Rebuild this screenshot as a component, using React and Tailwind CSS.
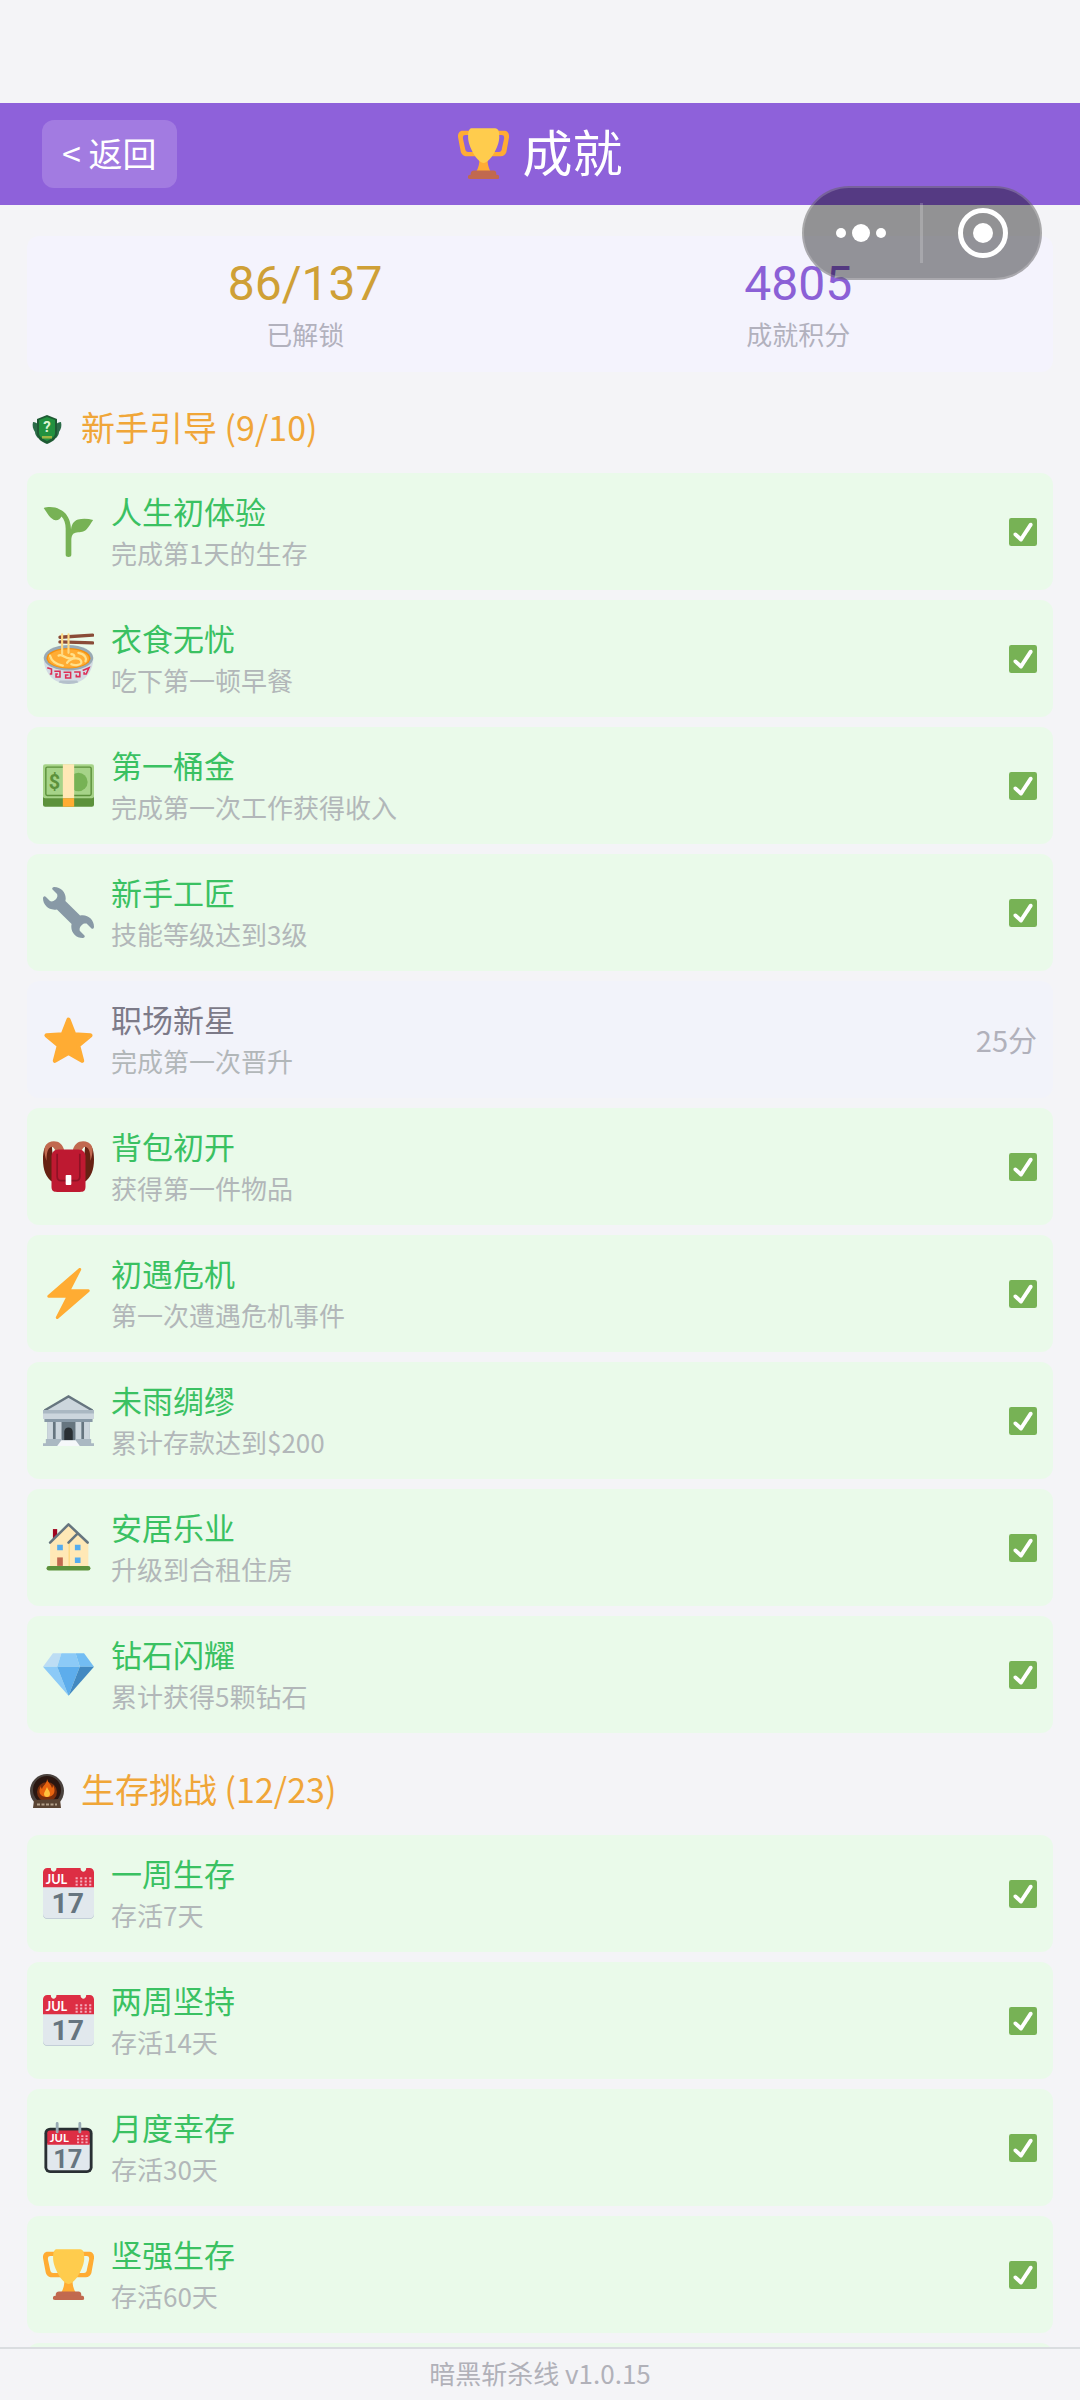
const icons = {
  trophy: (
    <>
      <path
        fill="#FFAC33"
        d="M5.123 5h6C12.227 5 13 4.896 13 6V4c0-1.104-.773-2-1.877-2h-8c-2 0-3.583 2.125-3 5 0 0 1.791 9.375 1.917 9.958C2.373 18.5 4.164 20 6.081 20h6.958c1.105 0-.039-1.896-.039-3v-2c0 1.104-.773 2-1.877 2h-4c-1.104 0-1.833-1.042-2-2S3.539 7.667 3.539 7.667C3.206 5.75 4.018 5 5.123 5zm25.812 0h-6C23.831 5 22 4.896 22 6V4c0-1.104 1.831-2 2.935-2h8c2 0 3.584 2.125 3 5 0 0-1.633 9.419-1.771 10-.354 1.5-2.042 3-4 3h-7.146C21.914 20 22 18.104 22 17v-2c0 1.104 1.831 2 2.935 2h4c1.104 0 1.834-1.042 2-2s1.584-7.333 1.584-7.333C32.851 5.75 32.04 5 30.935 5zM20.832 22c0-6.958-2.709 0-2.709 0s-3-6.958-3 0-3.291 10-3.291 10h12.292c-.001 0-3.292-3.042-3.292-10z"
      />
      <path
        fill="#FFCC4D"
        d="M29.123 6.577c0 6.775-6.77 18.192-11 18.192-4.231 0-11-11.417-11-18.192 0-5.195 1-6.319 3-6.319 1.374 0 6.025-.027 8-.027l7-.001c2.917-.001 4 .684 4 6.347z"
      />
      <path
        fill="#C1694F"
        d="M27 33c0 1.104.227 2-.877 2h-16C9.018 35 9 34.104 9 33v-1c0-1.104 1.164-2 2.206-2h13.917c1.042 0 1.877.896 1.877 2v1z"
      />
      <path
        fill="#C1694F"
        d="M29 34.625c0 .76.165 1.375-1.252 1.375H8.498C7.206 36 7 35.385 7 34.625v-.25C7 33.615 7.738 33 8.498 33h19.25c.759 0 1.252.615 1.252 1.375v.25z"
      />
    </>
  ),
  seedling: (
    <path
      fill="#77B255"
      d="M.5 1.4C3.500.2 8.600.4 11.800 2.400c3.200 1.100 5.800 4.300 7 8.200.6 1.900.9 3.900 1 6 .4-3.500 1.800-6.100 5-7 3.200-1 7.200-.6 10.600.2-2 2.600-3.600 6.600-6.600 8-2.800 1.100-5.600.4-7.400 1.800-1 .9-1.400 2.800-1.400 4.400v10.400c0 1-.8 1.600-2 1.600s-2-.6-2-1.600V16c0-3.600-1-6.800-3-8.600-.8 1.600-2.200 2.800-4.200 2.600C5.200 9.600 2.600 4.400.5 1.400z"
    />
  ),
  ramen: (
    <>
      <path fill="#D3DCE4" d="M.5 17.500C.5 27.500 7 36 18 36s17.500-8.500 17.500-18.500z" />
      <path fill="#B4C0CB" d="M11 35c4 1.300 10 1.300 14 0l-1-1.500H12z" />
      <ellipse cx="18" cy="17.500" rx="17.500" ry="9" fill="#99AAB5" />
      <ellipse cx="18" cy="17.800" rx="15.500" ry="7.300" fill="#F4900C" />
      <ellipse cx="18" cy="18" rx="14.500" ry="6.500" fill="#FFAC33" />
      <path
        fill="none"
        stroke="#FFE08A"
        strokeWidth="1.600"
        strokeLinecap="round"
        d="M5 16c1 4 4 6 9 7M11 16c2-2 4 2 8 2s4-3 1-3M17 21c3-4 9-4 10-1s-5 3-7 2M25 14c5 1 6 4 5 6"
      />
      <path stroke="#8A4B38" strokeWidth="2.400" strokeLinecap="round" d="M12 3l23-1.500M12 6.300L35 7" />
      <path
        fill="none"
        stroke="#FFD983"
        strokeWidth="1.500"
        strokeLinecap="round"
        d="M13.500 1v14M18 1v13"
      />
      <path
        fill="none"
        stroke="#DD2E56"
        strokeWidth="1.100"
        d="M3 24.500l3 1v3.500H4.800M8 27h4v4H9.200v-2h1.300M14.500 27.700h5v4H16v-2h2M22 27.500h4v3.300h-2.500v-1.500M28 26.500l4.500-2-2 4.500h-1.500v-1.500"
      />
    </>
  ),
  cash: (
    <>
      <path fill="#5C913B" d="M0 25h36v6.500a1.500 1.500 0 0 1-1.500 1.500h-33A1.500 1.500 0 0 1 0 31.500z" />
      <rect y="3" width="36" height="24" rx="1.500" fill="#A6D388" />
      <rect x="2" y="5" width="32" height="20" rx="1" fill="none" stroke="#5C913B" />
      <circle cx="25" cy="15.500" r="6.500" fill="#77B255" />
      <text
        x="8"
        y="20.500"
        textAnchor="middle"
        fontSize="14"
        fontWeight="700"
        fontFamily="Roboto, sans-serif"
        fill="#5C913B"
      >
        $
      </text>
      <path fill="#FFE8B6" d="M14 3h8v24h-8z" />
      <path fill="#FFAC33" d="M14 27h8v6h-8z" />
    </>
  ),
  wrench: (
    <path
      fill="#8899A6"
      d="M27.989 19.977c-.622 0-1.225.078-1.806.213L15.811 9.818c.134-.581.212-1.184.212-1.806C16.023 3.587 12.436 0 8.012 0 7.11 0 5.91.916 6.909 1.915l2.997 2.997s.999 1.998-.999 3.995-3.996.998-3.996.998L1.915 6.909C.916 5.91 0 7.105 0 8.012c0 4.425 3.587 8.012 8.012 8.012.622 0 1.225-.078 1.806-.212l10.371 10.371c-.135.581-.213 1.184-.213 1.806 0 4.425 3.588 8.011 8.012 8.011.901 0 2.101-.916 1.102-1.915l-2.997-2.997s-.999-1.998.999-3.995 3.995-.999 3.995-.999l2.997 2.997c1 .999 1.916-.196 1.916-1.102 0-4.425-3.587-8.012-8.011-8.012z"
    />
  ),
  star: (
    <path
      fill="#FFAC33"
      stroke="#FFAC33"
      strokeWidth="3"
      strokeLinejoin="round"
      d="M18 4l4 10.300 11.500.7-8.700 7.300 2.800 10.700L18 27.500l-9.600 5.500 2.800-10.700-8.700-7.300 11.500-.7z"
    />
  ),
  backpack: (
    <>
      <path fill="#662113" d="M6 1C1 2 0 7 0 13c0 7 2 13 7 16V12zM30 1c5 1 6 6 6 12 0 7-2 13-7 16V12z" />
      <path fill="#C1694F" d="M4 1c5-2 10 0 11 6H9C8 5 7 4 6 4 3 5 2.500 9 2.500 14 .5 8 0 3 4 1zM32 1c-5-2-10 0-11 6h6c1-2 2-3 3-3 3 1 3.500 5 3.500 10C35.500 8 36 3 32 1z" />
      <path fill="#BE1931" d="M6 11c0-3 2-5 5-5h14c3 0 5 2 5 5v21c0 3-1 4-4 4H10c-3 0-4-1-4-4z" />
      <path fill="none" stroke="#8F1225" strokeWidth="1.200" d="M10 9v16c0 2 1 3 3 3h10c2 0 3-1 3-3V9" />
      <rect x="16" y="24" width="4" height="7" rx=".6" fill="#FFF" />
    </>
  ),
  zap: (
    <path
      fill="#FFAC33"
      d="M32.938 15.651C32.792 15.26 32.418 15 32 15H19.925L26.89 1.458c.219-.426.106-.947-.271-1.243C26.437.071 26.218 0 26 0c-.233 0-.466.082-.653.243L18 6.588 3.347 19.243c-.316.273-.43.714-.284 1.105S3.582 21 4 21h12.075L9.11 34.542c-.219.426-.106.947.271 1.243.182.144.401.215.619.215.233 0 .466-.082.653-.243L18 29.412l14.653-12.655c.317-.273.43-.714.285-1.106z"
    />
  ),
  bank: (
    <>
      <path fill="#9AA9B5" d="M3 18h30v15H3z" />
      <path fill="#CCD6DD" d="M2 11L18 1l16 10z" />
      <path fill="none" stroke="#66757F" strokeWidth="1.600" d="M1 11L18 1l17 10" />
      <path fill="#AAB8C2" d="M0 10.500h36v3H0z" />
      <path fill="#CCD6DD" d="M0 13h36v4H0z" />
      <path fill="#8899A6" d="M1 17h34v2H1z" />
      <path fill="#66757F" d="M7 19h2v13H7zM13 19h10v13H13zM27 19h2v13h-2z" />
      <path fill="#CCD6DD" d="M3 19h4v13H3zM9 19h4v13H9zM23 19h4v13h-4zM29 19h4v13h-4z" />
      <path fill="#292F33" d="M15 32v-6c0-4 6-4 6 0v6z" />
      <path fill="#AAB8C2" d="M2 31h11v3h10v-3h11v3h2v2H0v-2h2z" />
      <path fill="#F5F8FA" d="M13 32h10l3 4H10z" />
    </>
  ),
  house: (
    <>
      <path fill="#A0041E" d="M7 5h3v8H7z" />
      <path fill="#FFE8B6" d="M5 14L18 2l8 7 6 6v18H5z" />
      <path fill="#FFD983" d="M18 15l1-1v19h-1z" />
      <path
        fill="none"
        stroke="#66757F"
        strokeWidth="1.800"
        strokeLinecap="round"
        strokeLinejoin="round"
        d="M5 14.500L18 1.700l13.500 12.800M18 14.500l6-6"
      />
      <path fill="#55ACEE" d="M10 16h4v4h-4zM22.500 16h4v4h-4zM22.500 25h4v4h-4z" />
      <path fill="#C1694F" d="M10 25h4v6h-4z" />
      <rect x="2.500" y="31" width="31" height="3.200" rx="1.600" fill="#5C913B" />
    </>
  ),
  gem: (
    <>
      <path fill="#BDDDF4" d="M7 3h6l-3 9.500H0z" />
      <path fill="#8CCAF7" d="M13 3h10l3 9.500H10zM0 12.500h10L18 33z" />
      <path fill="#73BDF3" d="M23 3h6l7 9.500H26z" />
      <path fill="#5DADEC" d="M10 12.500h16L18 33z" />
      <path fill="#4289C1" d="M26 12.500h10L18 33z" />
    </>
  ),
  calendar: (
    <>
      <rect y="8" width="36" height="28" rx="3" fill="#B9C6D0" />
      <rect y="8" width="36" height="27.500" rx="3" fill="#E1E8ED" />
      <path
        fill="#DD2E44"
        d="M3 0h2.500c0 3.500 4 3.500 4 0h17c0 3.500 4 3.500 4 0H33a3 3 0 0 1 3 3v10.500H0V3a3 3 0 0 1 3-3z"
      />
      <text x="9.500" y="11.300" textAnchor="middle" fontSize="9" fontWeight="700" fontFamily="Lato, sans-serif" fill="#FFF">
        JUL
      </text>
      <path
        stroke="#F4ABBA"
        strokeWidth="1.500"
        strokeDasharray="1.500 1.700"
        d="M23 7.200h11.500M23 9.500h11.500M23 11.800h11.500"
      />
      <text x="17.500" y="32" textAnchor="middle" fontSize="20" fontWeight="700" fontFamily="Roboto, sans-serif" fill="#66757F">
        17
      </text>
    </>
  ),
  spiral: (
    <>
      <rect x="1" y="4" width="34" height="32" rx="4" fill="#292F33" />
      <path fill="#E1E8ED" d="M3 15h30v17a2 2 0 0 1-2 2H5a2 2 0 0 1-2-2z" />
      <path fill="#DD2E44" d="M5 6h26a2 2 0 0 1 2 2v8H3V8a2 2 0 0 1 2-2z" />
      <path stroke="#99AAB5" strokeWidth="2" strokeLinecap="round" d="M10 1v6M26 1v6" />
      <text x="11.500" y="14" textAnchor="middle" fontSize="8" fontWeight="700" fontFamily="Lato, sans-serif" fill="#FFF">
        JUL
      </text>
      <path
        stroke="#F4ABBA"
        strokeWidth="1.300"
        strokeDasharray="1.500 1.500"
        d="M24 10h8M24 12.200h8M24 14.400h8"
      />
      <text x="17.500" y="32.500" textAnchor="middle" fontSize="18" fontWeight="700" fontFamily="Roboto, sans-serif" fill="#66757F">
        17
      </text>
    </>
  ),
  check: (
    <>
      <rect width="36" height="36" rx="3" fill="#77B255" />
      <path
        fill="#FFF"
        d="M29.28 6.362c-1.156-.751-2.704-.422-3.458.736L14.936 23.877l-5.029-4.65c-1.014-.938-2.596-.875-3.533.138-.937 1.014-.875 2.596.139 3.533l7.209 6.666c.48.445 1.09.665 1.696.665.673 0 1.534-.282 2.099-1.139.332-.506 12.5-19.27 12.5-19.27.751-1.159.421-2.707-.737-3.458z"
      />
    </>
  ),
  shield: (
    <>
      <path fill="#2B6B48" d="M4 11c2 0 4 1 6 3l-1 13c-2-2-3-4-3-6-2-3-3-6-2-10zM32 11c-2 0-4 1-6 3l1 13c2-2 3-4 3-6 2-3 3-6 2-10z" />
      <path fill="#1E5A34" d="M18 4l10 4v15c0 5-5 8-10 10-5-2-10-5-10-10V8z" />
      <path fill="#22913F" d="M18 6l8 3v13c0 4-4 6-8 8-4-2-8-4-8-8V9z" />
      <text x="18" y="21" textAnchor="middle" fontSize="15" fontWeight="700" fontFamily="Roboto, sans-serif" fill="#DDF5D3">
        ?
      </text>
      <path fill="#9DB544" d="M13 25h10v2.500H13z" />
    </>
  ),
  campfire: (
    <>
      <circle cx="18" cy="18" r="17" fill="#4A423E" />
      <circle cx="18" cy="17" r="14" fill="#2A1610" />
      <circle cx="18" cy="19" r="10" fill="#7A2E0C" />
      <path fill="#E8640F" d="M18 6c1 4 4 5 5 9 1-1 1-2 1-3 3 5 2 12-6 12s-9-6-6-11c0 1 0 2 1 3 1-4 5-5 5-10z" />
      <path fill="#FFC23D" d="M18 14c1 3 3 4 3 7 0 4-6 4-6 0 0-2 2-4 3-7z" />
      <path fill="#5A4434" d="M5 27l26-1 1 9H4z" />
      <path stroke="#B3A08A" strokeWidth="2" strokeDasharray="3 1.500" d="M8 31.500h20" />
    </>
  ),
};

function Icon({ name, className }) {
  return (
    <svg viewBox="0 0 36 36" className={className} aria-hidden="true">
      {icons[name]}
    </svg>
  );
}

const sections = [
  {
    icon: "shield",
    title: "新手引导 (9/10)",
    items: [
      { icon: "seedling", name: "人生初体验", desc: "完成第1天的生存", done: true },
      { icon: "ramen", name: "衣食无忧", desc: "吃下第一顿早餐", done: true },
      { icon: "cash", name: "第一桶金", desc: "完成第一次工作获得收入", done: true },
      { icon: "wrench", name: "新手工匠", desc: "技能等级达到3级", done: true },
      { icon: "star", name: "职场新星", desc: "完成第一次晋升", points: "25分" },
      { icon: "backpack", name: "背包初开", desc: "获得第一件物品", done: true },
      { icon: "zap", name: "初遇危机", desc: "第一次遭遇危机事件", done: true },
      { icon: "bank", name: "未雨绸缪", desc: "累计存款达到$200", done: true },
      { icon: "house", name: "安居乐业", desc: "升级到合租住房", done: true },
      { icon: "gem", name: "钻石闪耀", desc: "累计获得5颗钻石", done: true },
    ],
  },
  {
    icon: "campfire",
    title: "生存挑战 (12/23)",
    items: [
      { icon: "calendar", name: "一周生存", desc: "存活7天", done: true },
      { icon: "calendar", name: "两周坚持", desc: "存活14天", done: true },
      { icon: "spiral", name: "月度幸存", desc: "存活30天", done: true },
      { icon: "trophy", name: "坚强生存", desc: "存活60天", done: true },
    ],
    more: true,
  },
];

function Achievement({ item }) {
  return (
    <li
      className={`flex items-center rounded-xl py-[15px] px-4 ${
        item.done ? "bg-[#eafaea]" : "bg-[#f2f3fa]"
      }`}
    >
      <Icon name={item.icon} className="w-[51px] h-[51px] shrink-0" />
      <div className="flex-1 ml-[17px] pb-1">
        <h3
          className={`text-[31px] leading-[46px] ${
            item.done ? "text-[#3ac162]" : "text-[#7c7a88]"
          }`}
        >
          {item.name}
        </h3>
        <p className="text-[26px] leading-[37px] text-[#b2b7b9]">{item.desc}</p>
      </div>
      {item.done ? (
        <Icon name="check" className="w-7 h-7" />
      ) : (
        <span className="text-[29px] text-[#b1b1bb]">{item.points}</span>
      )}
    </li>
  );
}

function Section({ section }) {
  return (
    <section>
      <h2 className="flex items-center gap-4 h-[54px] pl-[2px] text-[34px] text-[#f0a638]">
        <Icon name={section.icon} className="w-9 h-9 mt-[2px]" />
        <span className="pb-[3px]">{section.title}</span>
      </h2>
      <ul className="flex flex-col gap-[10px] mt-[18px]">
        {section.items.map((item) => (
          <Achievement key={item.name} item={item} />
        ))}
        {section.more && <li className="h-4 rounded-t-xl bg-[#eafaea]" aria-hidden="true" />}
      </ul>
    </section>
  );
}

function Stat({ value, label, className }) {
  return (
    <div className="text-center">
      <div className={`font-[Roboto] text-[48px] leading-[56px] ${className}`}>{value}</div>
      <div className="mt-[3px] text-[26px] leading-[38px] text-[#b2b1bd]">{label}</div>
    </div>
  );
}

function Capsule() {
  return (
    <div className="absolute top-[186px] right-[38px] z-10 flex items-center w-60 h-[94px] rounded-full bg-black/40 border-2 border-white/20">
      <button aria-label="更多" className="flex-1 flex items-center justify-center gap-[6px] pr-[2px]">
        <span className="w-[10px] h-[10px] rounded-full bg-white"></span>
        <span className="w-[18px] h-[18px] rounded-full bg-white"></span>
        <span className="w-[10px] h-[10px] rounded-full bg-white"></span>
      </button>
      <span className="w-[3px] h-[60px] bg-white/20"></span>
      <button aria-label="关闭" className="flex-1 flex items-center justify-center pl-1">
        <span className="flex items-center justify-center w-[50px] h-[50px] rounded-full border-5 border-white">
          <span className="w-5 h-5 rounded-full bg-white"></span>
        </span>
      </button>
    </div>
  );
}

export default function App() {
  return (
    <div className="relative flex flex-col h-screen bg-[#f4f4f7] font-['Noto_Sans_CJK_SC',sans-serif]">
      <header className="mt-[103px] grid grid-cols-[1fr_auto_1fr] items-center h-[102px] shrink-0 px-[42px] bg-[#8e61da] text-white">
        <button className="justify-self-start h-[68px] px-5 pb-1 rounded-xl bg-[#a27be1] text-[34px]">
          &lt; 返回
        </button>
        <h1 className="flex items-center gap-[14px] pb-[2px] text-[50px] leading-[60px]">
          <Icon name="trophy" className="w-[51px] h-[51px]" />
          <span className="pb-[6px]">成就</span>
        </h1>
      </header>

      <Capsule />

      <main className="flex-1 min-h-0 overflow-hidden px-[27px] pt-[31px]">
        <div className="flex justify-around rounded-xl bg-[#f4f3fd] px-5 pt-5 pb-[19px]">
          <Stat value="86/137" label="已解锁" className="text-[#cfa036]" />
          <Stat value="4805" label="成就积分" className="text-[#8b60d6]" />
        </div>
        <div className="flex flex-col gap-[30px] mt-[29px]">
          {sections.map((section) => (
            <Section key={section.title} section={section} />
          ))}
        </div>
      </main>

      <footer className="shrink-0 h-[53px] border-t-2 border-[#dadde0] text-center text-[26px] leading-[47px] text-[#b1b1b9]">
        暗黑斩杀线 v1.0.15
      </footer>
    </div>
  );
}
